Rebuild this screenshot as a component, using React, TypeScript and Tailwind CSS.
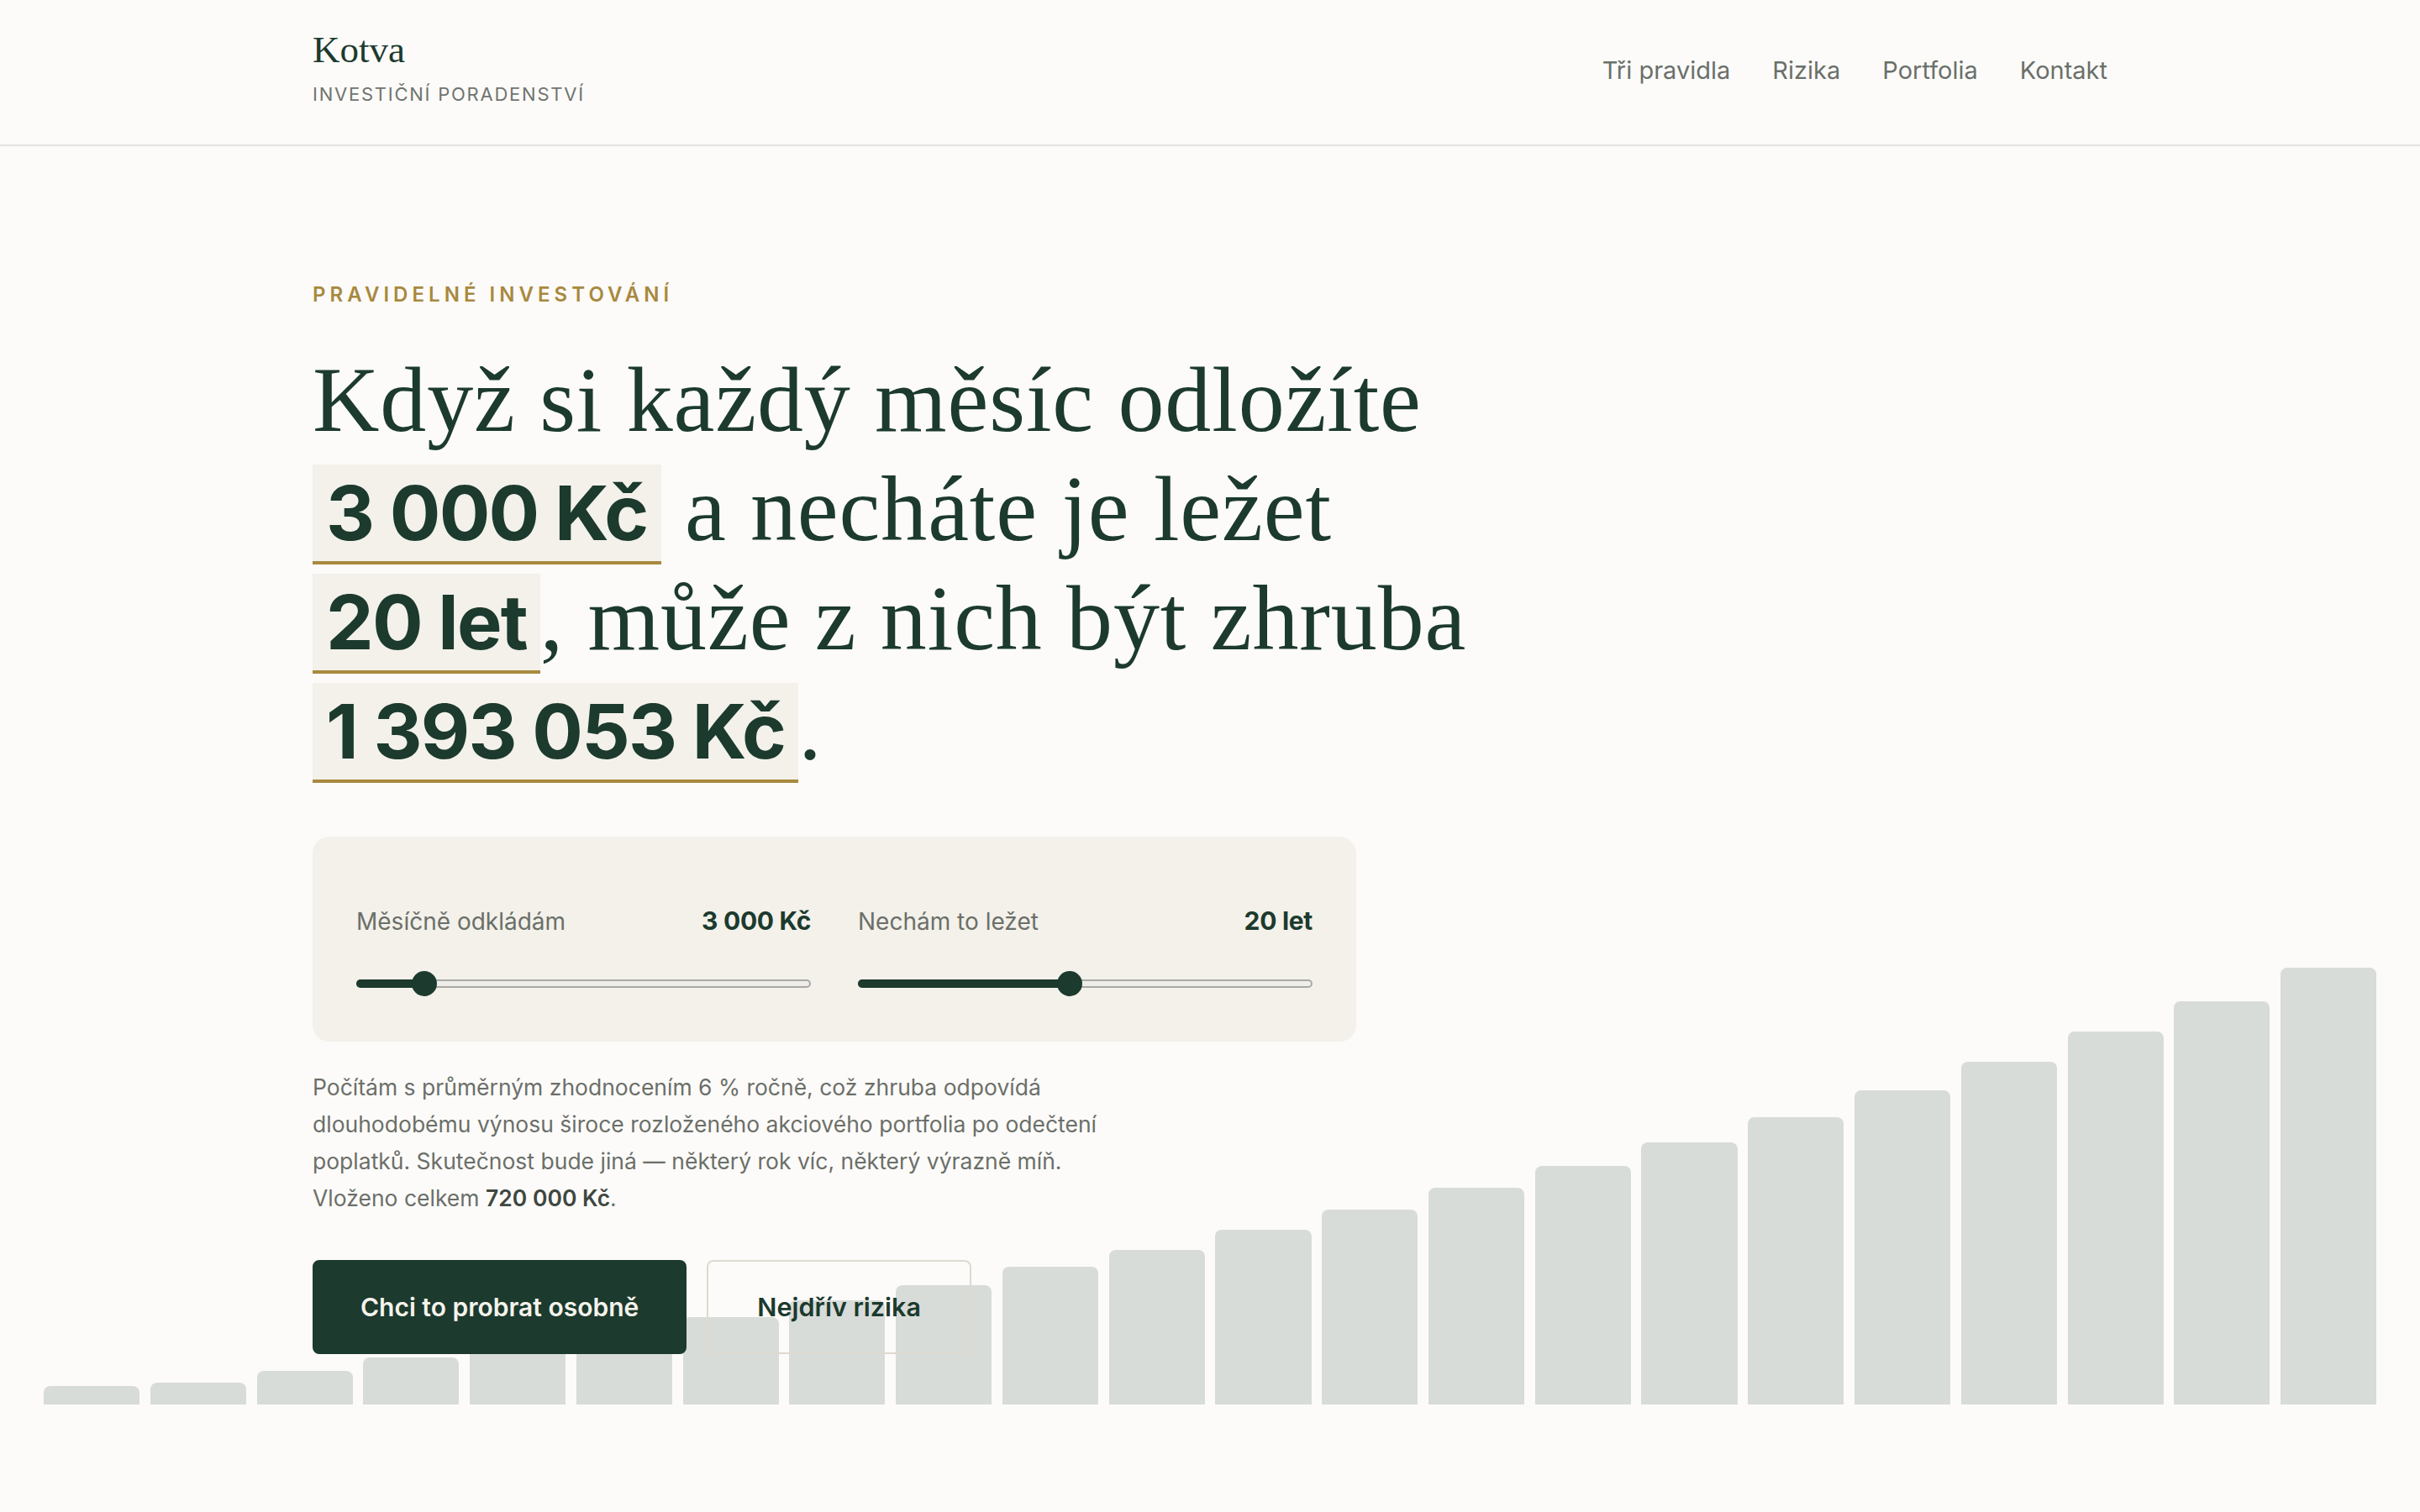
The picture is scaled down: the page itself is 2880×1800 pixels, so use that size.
import { useState } from 'react';

// výšky sloupců v pozadí (px), rostou zhruba jako složené úročení
const BAR_HEIGHTS = [22, 26, 40, 56, 72, 88, 104, 124, 142, 164, 184, 208, 232, 258, 284, 312, 342, 374, 408, 444, 480, 520];

const MONTHLY_MIN = 500;
const MONTHLY_MAX = 20000;
const YEARS_MIN = 1;
const YEARS_MAX = 42;

function formatNumber(n: number) {
  return Math.round(n).toString().replace(/\B(?=(\d{3})+(?!\d))/g, '\u00a0');
}

function futureValue(monthly: number, years: number, rate = 0.06) {
  const r = rate / 12;
  const n = years * 12;
  return monthly * ((Math.pow(1 + r, n) - 1) / r) * (1 + r);
}

interface RangeProps {
  label: string;
  valueText: string;
  value: number;
  min: number;
  max: number;
  step: number;
  onChange: (v: number) => void;
}

function Range({ label, valueText, value, min, max, step, onChange }: RangeProps) {
  const frac = (value - min) / (max - min);
  const pos = `calc(15px + ${frac} * (100% - 30px))`;

  return (
    <div>
      <div className="flex h-[40px] items-baseline justify-between">
        <span className="text-[28px] leading-[40px] text-[#6b6f69]">{label}</span>
        <span className="text-[30px] font-bold leading-[40px] tracking-[-0.01em] text-[#1c3a2e]">{valueText}</span>
      </div>
      <div className="relative mt-[40px] h-[30px]">
        <div className="absolute inset-x-0 top-[10px] h-[10px] rounded-full border-2 border-[#a9a9a5] bg-[#eeede9]" />
        <div className="absolute left-0 top-[10px] h-[10px] rounded-full bg-[#1c3a2e]" style={{ width: pos }} />
        <div className="absolute top-0 h-[30px] w-[30px] -translate-x-1/2 rounded-full bg-[#1c3a2e]" style={{ left: pos }} />
        <input
          type="range"
          min={min}
          max={max}
          step={step}
          value={value}
          onChange={(e) => onChange(Number(e.target.value))}
          className="absolute inset-0 h-full w-full cursor-pointer opacity-0"
          aria-label={label}
        />
      </div>
    </div>
  );
}

function Highlight({ children }: { children: React.ReactNode }) {
  return (
    <span className="border-b-4 border-[#a8893f] bg-[#f3f1ea] px-4 py-[3px] font-['Inter',sans-serif] text-[90px] font-bold leading-none tracking-[-0.02em]">
      {children}
    </span>
  );
}

export default function App() {
  const [monthly, setMonthly] = useState(3000);
  const [years, setYears] = useState(20);

  const total = futureValue(monthly, years);
  const invested = monthly * 12 * years;

  return (
    <div className="min-h-screen bg-[#fcfbf9] font-['Inter',sans-serif] text-[#1c3a2e]">
      <header className="border-b-2 border-[#e3e2dd]">
        <div className="mx-auto flex w-full max-w-[2304px] items-start justify-between px-[84px] pb-[45px] pt-[34px]">
          <div>
            <div className="font-['Liberation_Serif',serif] text-[45px] leading-[50px] text-[#1c3a2e]">Kotva</div>
            <div className="mt-[13px] text-[22px] leading-[30px] tracking-[0.08em] text-[#6f746f]">INVESTIČNÍ PORADENSTVÍ</div>
          </div>
          <nav className="flex gap-[50px] pt-[30px] text-[29px] leading-[40px] text-[#6a706a]">
            <a href="#pravidla">Tři pravidla</a>
            <a href="#rizika">Rizika</a>
            <a href="#portfolia">Portfolia</a>
            <a href="#kontakt">Kontakt</a>
          </nav>
        </div>
      </header>

      <section className="relative overflow-hidden pb-[188px]">
        <div aria-hidden className="pointer-events-none absolute inset-x-[52px] bottom-[128px] flex h-[520px] items-end gap-[12.7px]">
          {BAR_HEIGHTS.map((h, i) => (
            <div key={i} className="flex-1 rounded-t-[8px] bg-[#d8dcd9]" style={{ height: h }} />
          ))}
        </div>

        <div className="relative z-10 mx-auto w-full max-w-[2304px] px-[84px] pt-[161px]">
          <p className="text-[24px] font-semibold leading-[32px] tracking-[0.21em] text-[#a8893f]">PRAVIDELNÉ INVESTOVÁNÍ</p>

          <h1 className="mt-[44px] font-['Liberation_Serif',serif] text-[110px] font-normal leading-[130px] tracking-[0.008em] text-[#1c3a2e]">
            Když si každý měsíc odložíte
            <br />
            <Highlight>{formatNumber(monthly)}&nbsp;Kč</Highlight> a necháte je ležet
            <br />
            <Highlight>{years}&nbsp;let</Highlight>, může z nich být zhruba
            <br />
            <Highlight>{formatNumber(total)}&nbsp;Kč</Highlight>.
          </h1>

          <div className="mt-[65px] grid w-[1242px] grid-cols-2 gap-[56px] rounded-[20px] bg-[#f3f1ea] px-[52px] pb-[54px] pt-[80px]">
            <Range
              label="Měsíčně odkládám"
              valueText={`${formatNumber(monthly)}\u00a0Kč`}
              value={monthly}
              min={MONTHLY_MIN}
              max={MONTHLY_MAX}
              step={500}
              onChange={setMonthly}
            />
            <Range
              label="Nechám to ležet"
              valueText={`${years}\u00a0let`}
              value={years}
              min={YEARS_MIN}
              max={YEARS_MAX}
              step={1}
              onChange={setYears}
            />
          </div>

          <p className="mt-[32px] max-w-[1440px] text-[26.5px] leading-[44px] text-[#6b6f69]">
            Počítám s průměrným zhodnocením 6&nbsp;% ročně, což zhruba odpovídá
            <br />
            dlouhodobému výnosu široce rozloženého akciového portfolia po odečtení
            <br />
            poplatků. Skutečnost bude jiná — některý rok víc, některý výrazně míň.
            <br />
            Vloženo celkem <strong className="font-semibold text-[#3f4741]">{formatNumber(invested)}&nbsp;Kč</strong>.
          </p>

          <div className="mt-[52px] flex gap-[24px]">
            <a
              href="#kontakt"
              className="flex h-[112px] items-center rounded-[8px] border-2 border-[#1c3a2e] bg-[#1c3a2e] px-[55px] text-[30px] font-semibold text-[#f5f3ec]"
            >
              Chci to probrat osobně
            </a>
            <a
              href="#rizika"
              className="flex h-[112px] items-center rounded-[8px] border-2 border-[#dedad0] px-[58px] text-[30.5px] font-semibold text-[#1c3a2e]"
            >
              Nejdřív rizika
            </a>
          </div>
        </div>
      </section>
    </div>
  );
}
